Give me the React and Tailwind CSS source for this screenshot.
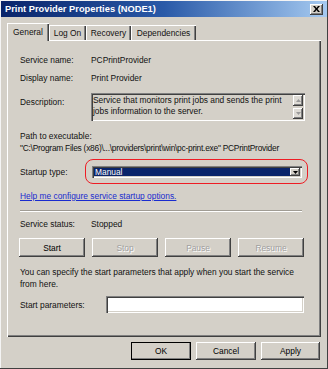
const raised =
  "shadow-[inset_-1px_-1px_#404040,inset_1px_1px_#ffffff,inset_-2px_-2px_#808080]";
const sunken =
  "shadow-[inset_1px_1px_#808080,inset_2px_2px_#404040,inset_-1px_-1px_#ffffff,inset_-2px_-2px_#d4d0c8]";

function Btn({ children, disabled, className = "" }) {
  return (
    <div
      className={`flex items-center justify-center bg-[#d4d0c8] ${raised} ${
        disabled ? "text-[#a0a0a0] [text-shadow:1px_1px_#ffffff]" : "text-black"
      } ${className}`}
    >
      {children}
    </div>
  );
}

function Tab({ label, active, width }) {
  if (active) {
    return (
      <div
        className={`relative z-10 -mb-[1px] flex h-[18px] items-start justify-center bg-[#d4d0c8] pt-[3px] shadow-[inset_1px_1px_#ffffff,inset_-1px_0_#404040,inset_-2px_0_#808080] ${width}`}
      >
        {label}
      </div>
    );
  }
  return (
    <div
      className={`flex h-[15px] items-center justify-center bg-[#d4d0c8] shadow-[inset_1px_1px_#ffffff,inset_-1px_0_#404040,inset_-2px_0_#808080] ${width}`}
    >
      {label}
    </div>
  );
}

export default function App() {
  return (
    <div className="flex h-[369px] w-[328px] flex-col overflow-hidden bg-[#d4d0c8] font-['Liberation_Sans',Arial,sans-serif] text-[8.4px] leading-[12px] text-[#111] shadow-[inset_-1px_-1px_#404040,inset_1px_1px_#f4f4f4]">
      {/* title bar */}
      <div className="m-[1px] flex h-[16px] items-center justify-between bg-linear-to-r from-[#0a246a] via-[#2a5aa8] to-[#a6caf0] pl-[4px] pr-[4px]">
        <span className="text-[9.3px] font-bold text-white">Print Provider Properties (NODE1)</span>
        <div
          className={`flex h-[11px] w-[13px] items-center justify-center bg-[#d4d0c8] ${raised}`}
        >
          <svg width="7" height="6" viewBox="0 0 7 6">
            <path d="M0 0h2l1.5 2L5 0h2L4.5 3 7 6H5L3.5 4 2 6H0l2.5-3z" fill="#000" />
          </svg>
        </div>
      </div>

      {/* tabs */}
      <div className="ml-[7px] mt-[5px] flex h-[17px] items-end">
        <Tab label="General" active width="w-[42px]" />
        <Tab label="Log On" width="w-[37px]" />
        <Tab label="Recovery" width="w-[45px]" />
        <Tab label="Dependencies" width="w-[65px]" />
      </div>

      {/* panel */}
      <div className="ml-[7px] flex h-[297px] w-[314px] flex-col overflow-hidden pl-[13px] shadow-[inset_1px_1px_#ffffff,inset_-1px_-1px_#404040,inset_-2px_-2px_#808080]">
        <div className="mt-[14px] flex h-[12px] items-center">
          <span className="w-[71px]">Service name:</span>
          <span>PCPrintProvider</span>
        </div>
        <div className="mt-[6px] flex h-[12px] items-center">
          <span className="w-[71px]">Display name:</span>
          <span>Print Provider</span>
        </div>
        <div className="mt-[9px] flex h-[28px] items-start">
          <span className="w-[71px] pt-[3px]">Description:</span>
          <div className={`flex h-[28px] w-[214px] bg-[#d4d0c8] ${sunken}`}>
            <div className="flex-1 pl-[2px] pt-[2px] leading-[11px]">
              Service that monitors print jobs and sends the print jobs information to the server.
            </div>
            <div className="flex flex-col justify-between py-[2px] pr-[2px]">
              <div className={`flex h-[11px] w-[10px] items-center justify-center bg-[#dedbd5] ${raised}`}>
                <svg width="5" height="3" viewBox="0 0 5 3">
                  <path d="M2.5 0L5 3H0z" fill="#9a9a9a" />
                </svg>
              </div>
              <div className={`flex h-[11px] w-[10px] items-center justify-center bg-[#dedbd5] ${raised}`}>
                <svg width="5" height="3" viewBox="0 0 5 3">
                  <path d="M0 0h5L2.5 3z" fill="#9a9a9a" />
                </svg>
              </div>
            </div>
          </div>
        </div>
        <div className="mt-[9px] h-[12px]">Path to executable:</div>
        <div className="h-[12px] whitespace-nowrap tracking-[-0.25px]">
          "C:\Program Files (x86)\...\providers\print\win\pc-print.exe" PCPrintProvider
        </div>
        <div className="mt-[12px] flex h-[12px] items-center">
          <span className="w-[72px]">Startup type:</span>
          <div className="relative">
            <div className={`flex h-[12px] w-[210px] items-center bg-white p-[2px] ${sunken}`}>
              <div className="flex h-full flex-1 items-center bg-[#0a246a] pl-[1px] text-white">
                Manual
              </div>
              <div className={`flex h-full w-[10px] items-center justify-center bg-[#d4d0c8] ${raised}`}>
                <svg width="5" height="3" viewBox="0 0 5 3">
                  <path d="M0 0h5L2.5 3z" fill="#000" />
                </svg>
              </div>
            </div>
            <div className="pointer-events-none absolute -bottom-[6px] -left-[7px] -right-[6px] -top-[7px] rounded-[8px] border-[1.5px] border-[#ee1c24]" />
          </div>
        </div>
        <div className="mt-[12px] h-[12px] text-[#1a2ccf] underline">
          Help me configure service startup options.
        </div>
        <div className="mt-[8px] h-[2px] w-[282px] border-b border-t border-b-white border-t-[#a09c94]" />
        <div className="mt-[6px] flex h-[12px] items-center">
          <span className="w-[71px]">Service status:</span>
          <span>Stopped</span>
        </div>
        <div className="-ml-[1px] mt-[8px] flex h-[19px] gap-[7px]">
          <Btn className="w-[66px]">Start</Btn>
          <Btn disabled className="w-[66px]">Stop</Btn>
          <Btn disabled className="w-[66px]">Pause</Btn>
          <Btn disabled className="w-[66px]">Resume</Btn>
        </div>
        <div className="mt-[9px] w-[285px]">
          You can specify the start parameters that apply when you start the service from here.
        </div>
        <div className="mt-[6px] flex h-[17px] items-center">
          <span className="w-[86px]">Start parameters:</span>
          <div className={`h-[17px] w-[198px] bg-white ${sunken}`} />
        </div>
      </div>

      {/* dialog buttons */}
      <div className="mt-[5px] flex justify-end gap-[5px] pr-[8px]">
        <Btn className="h-[18px] w-[60px] outline outline-1 -outline-offset-1 outline-black">
          OK
        </Btn>
        <Btn className="h-[18px] w-[60px]">Cancel</Btn>
        <Btn className="h-[18px] w-[59px]">Apply</Btn>
      </div>
    </div>
  );
}
